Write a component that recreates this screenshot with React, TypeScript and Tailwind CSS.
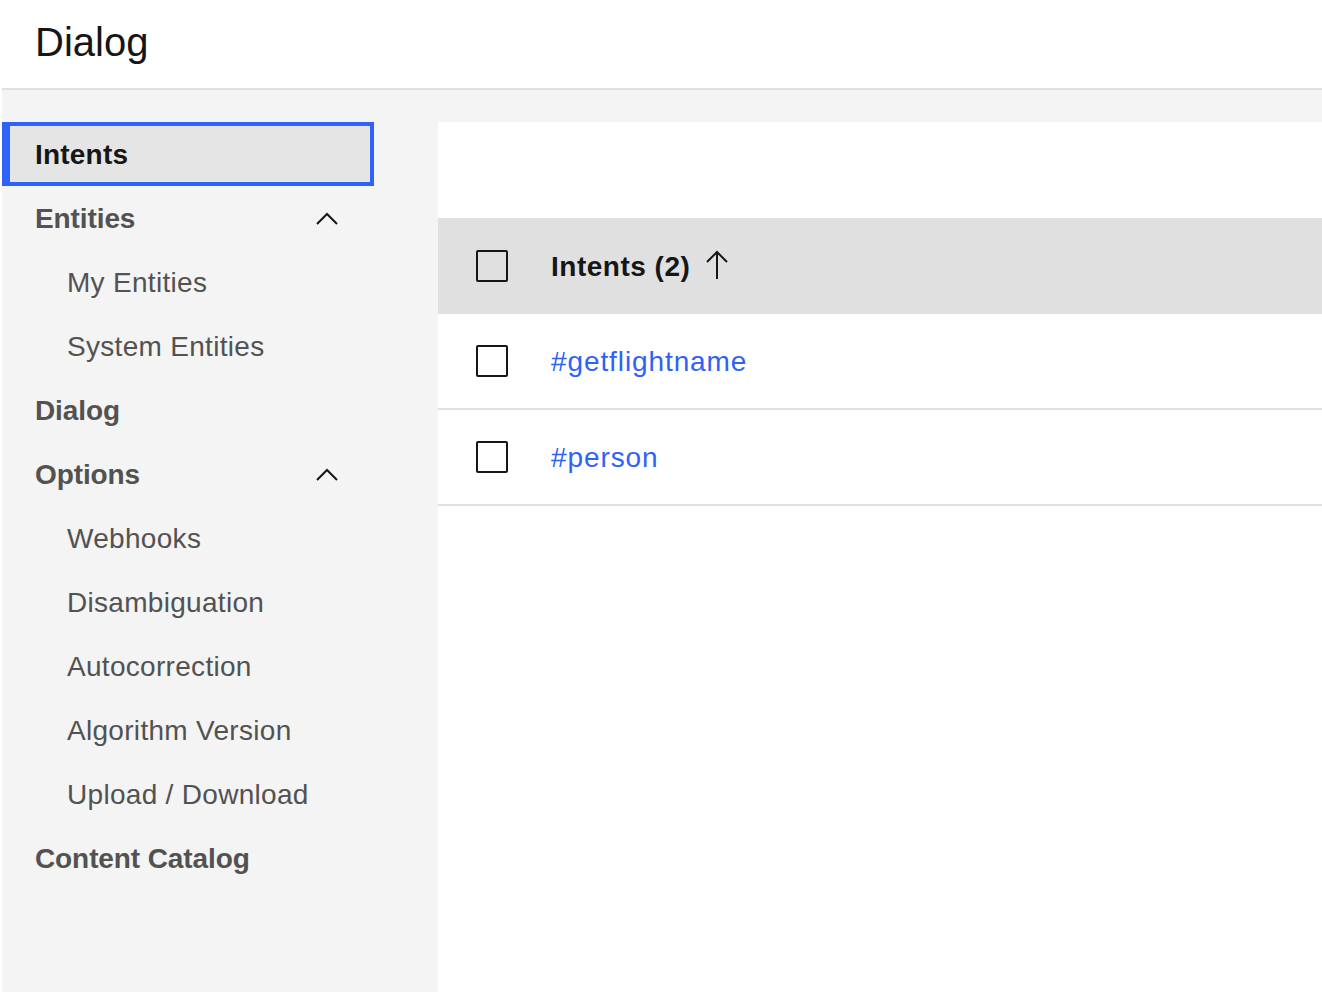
const font = { fontFamily: '"Liberation Sans", Arial, sans-serif' };

const ChevronUp = () => (
  <svg width="22" height="14" viewBox="0 0 22 14" fill="none" stroke="#161616" strokeWidth="2">
    <path d="M1 13 L11 3 L21 13" />
  </svg>
);

const ArrowUp = () => (
  <svg width="22" height="30" viewBox="0 0 22 30" fill="none" stroke="#161616" strokeWidth="2">
    <path d="M11 29 V2" />
    <path d="M1 12 L11 2 L21 12" />
  </svg>
);

const Checkbox = () => (
  <div className="w-8 h-8 border-2 border-[#161616] rounded-[2px] shrink-0" />
);

type NavItem = { label: string; sub?: boolean; chevron?: boolean; active?: boolean };

const nav: NavItem[] = [
  { label: "Intents", active: true },
  { label: "Entities", chevron: true },
  { label: "My Entities", sub: true },
  { label: "System Entities", sub: true },
  { label: "Dialog" },
  { label: "Options", chevron: true },
  { label: "Webhooks", sub: true },
  { label: "Disambiguation", sub: true },
  { label: "Autocorrection", sub: true },
  { label: "Algorithm Version", sub: true },
  { label: "Upload / Download", sub: true },
  { label: "Content Catalog" },
];

export default function App() {
  return (
    <div className="w-[1322px] h-[992px] bg-white flex flex-col overflow-hidden" style={font}>
      <header className="h-[90px] pl-[2px] shrink-0">
        <div className="h-full border-b-2 border-[#e0e0e0] flex items-center pl-[33px] pb-[4px]">
          <h1 className="text-[40px] leading-none text-[#161616] font-normal">Dialog</h1>
        </div>
      </header>

      <div className="flex-1 flex ml-[2px] bg-[#f4f4f4]">
        <nav className="w-[436px] pt-8 flex flex-col shrink-0">
          {nav.map((item) =>
            item.active ? (
              <div
                key={item.label}
                className="h-16 w-[372px] bg-[#e5e5e5] border-4 border-l-8 border-[#2f62f6] flex items-center pl-[25px] pt-[2px] text-[28px] font-bold text-[#161616] tracking-[0.2px]"
              >
                {item.label}
              </div>
            ) : (
              <div
                key={item.label}
                className={`h-16 w-[372px] flex items-center justify-between pt-[2px] text-[28px] text-[#525252] ${
                  item.sub ? "pl-[65px] font-normal tracking-[0.3px]" : "pl-[33px] font-bold tracking-[-0.1px]"
                } pr-[36px]`}
              >
                <span>{item.label}</span>
                {item.chevron && (
                  <span className="-mt-[2px]">
                    <ChevronUp />
                  </span>
                )}
              </div>
            )
          )}
        </nav>

        <main className="flex-1 bg-white mt-8">
          <div className="h-24" />
          <div className="h-24 bg-[#e0e0e0] flex items-center pl-[38px]">
            <Checkbox />
            <span className="ml-[43px] pt-[2px] text-[28px] font-bold text-[#161616] tracking-[0.5px]">Intents (2)</span>
            <span className="ml-[16px] mt-[-2px]">
              <ArrowUp />
            </span>
          </div>
          {["#getflightname", "#person"].map((name) => (
            <div key={name} className="h-24 border-b-2 border-[#e0e0e0] flex items-center pl-[38px]">
              <Checkbox />
              <span className="ml-[43px] pt-[2px] text-[28px] text-[#2f62f6] tracking-[0.9px]">{name}</span>
            </div>
          ))}
        </main>
      </div>
    </div>
  );
}
